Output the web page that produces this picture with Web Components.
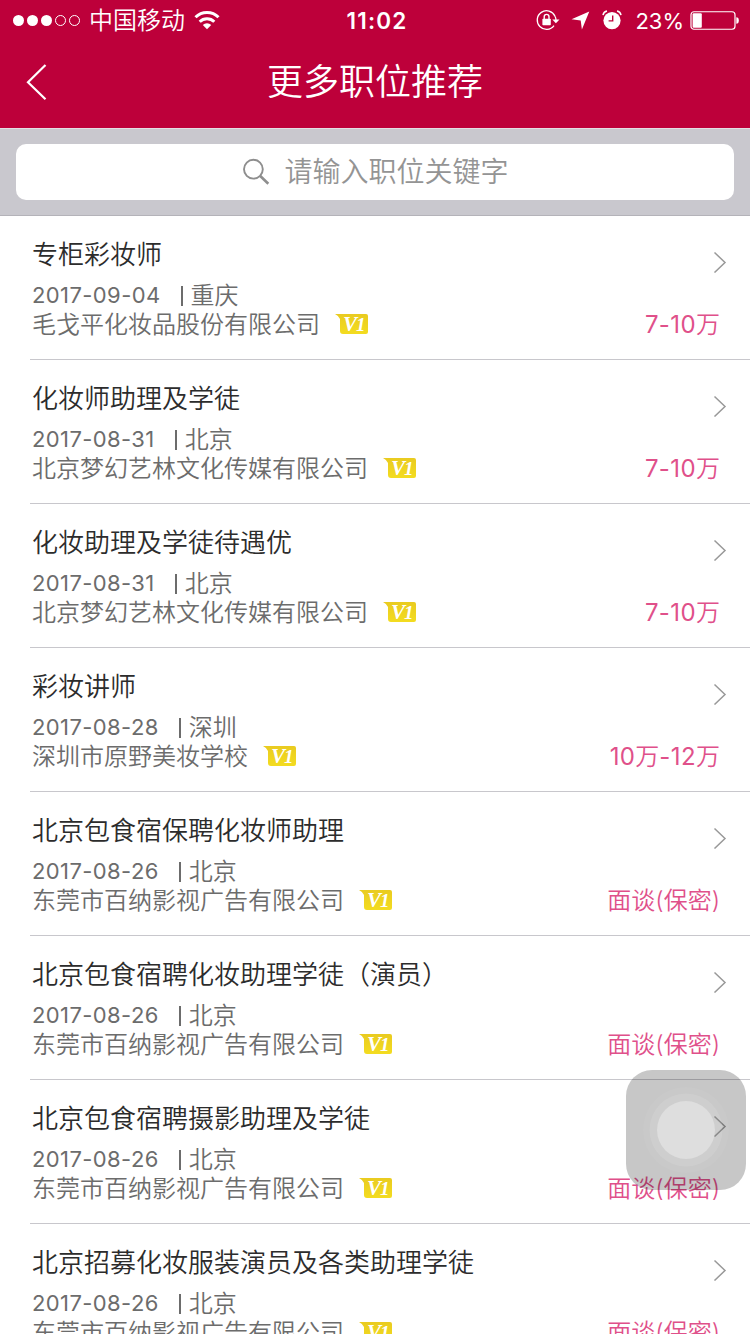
<!DOCTYPE html>
<html lang="zh-CN">
<head>
<meta charset="UTF-8">
<title>更多职位推荐</title>
<style>
    html, body {
        margin: 0;
        height: 1334px;
        overflow: hidden;
    }

    body {
        background: #fff;
        font-family: Inter, "Noto Sans CJK SC", sans-serif;
        font-weight: 350;
    }
</style>
</head>
<body>
<job-app></job-app>

<script>
    class StatusBar extends HTMLElement {
        constructor() {
            super();
            this.attachShadow({ mode: 'open' });
        }

        connectedCallback() {
            this.shadowRoot.innerHTML = `
                <style>
                    :host {
                        display: grid;
                        grid-template-columns: 1fr auto 1fr;
                        align-items: center;
                        height: 40px;
                        padding: 0 11px 0 13px;
                        color: #fff;
                        font-size: 24px;
                        line-height: 40px;
                    }

                    .left, .right {
                        display: flex;
                        align-items: center;
                    }

                    .right {
                        justify-content: flex-end;
                    }

                    .carrier {
                        margin: 0 9px 0 8px;
                        padding-top: 2px;
                        line-height: 38px;
                    }

                    .time {
                        padding: 2px 0 0 2px;
                        font-size: 22.5px;
                        font-weight: 600;
                        letter-spacing: 1.2px;
                        line-height: 38px;
                    }

                    .percent {
                        font-size: 22px;
                        font-weight: 400;
                        margin: 0 6px 0 13px;
                        padding-top: 2px;
                        line-height: 38px;
                    }

                    svg {
                        display: block;
                        flex: none;
                    }
                </style>
                <div class="left">
                    <svg width="68" height="12" viewBox="0 0 68 12" fill="#fff">
                        <circle cx="5.5" cy="6.5" r="5.5"/>
                        <circle cx="19.5" cy="6.5" r="5.5"/>
                        <circle cx="33.5" cy="6.5" r="5.5"/>
                        <g fill="none" stroke="#fff">
                            <circle cx="47.5" cy="6.5" r="5"/>
                            <circle cx="61.5" cy="6.5" r="5"/>
                        </g>
                    </svg>
                    <span class="carrier">中国移动</span>
                    <svg width="26" height="20" viewBox="0 0 26 20">
                        <g fill="none" stroke="#fff" stroke-width="3">
                            <path d="M1.5 7.3a16 16 0 0 1 23 0"/>
                            <path d="M5.7 11.7a10.4 10.4 0 0 1 14.6 0"/>
                        </g>
                        <path d="M8.8 15a6 6 0 0 1 8.4 0L13 19.2z" fill="#fff"/>
                    </svg>
                </div>
                <span class="time">11:02</span>
                <div class="right">
                    <svg width="24" height="22" viewBox="0 0 24 22">
                        <path d="M19 7.2A9.3 9.3 0 1 0 18 16.6M19 7.2q1 1.8 1 4" fill="none" stroke="#fff" stroke-width="1.3"/>
                        <path d="M16.3 10.4h7.2l-3.6 3.8z" fill="#fff"/>
                        <rect x="6.4" y="9.7" width="8.4" height="6.6" rx=".8" fill="#fff"/>
                        <path d="M8.2 10.5V7.8a2.4 2.4 0 0 1 4.8 0v2.7" fill="none" stroke="#fff" stroke-width="1.4"/>
                    </svg>
                    <svg width="19" height="19" viewBox="0 0 19 19" style="margin-left: 11px">
                        <path d="M18.3.5 10.9 18.5 9.7 9.6.5 8.3z" fill="#fff"/>
                    </svg>
                    <svg width="20" height="20" viewBox="0 0 20 20" style="margin-left: 12px">
                        <circle cx="10" cy="10.6" r="8.6" fill="#fff"/>
                        <path d="M10.7 5.5v5.4H6.6" fill="none" stroke="#bd003a" stroke-width="1.4"/>
                        <path d="M1 5.2A5 5 0 0 1 5 1.1M19 5.2a5 5 0 0 0-4-4.1" fill="none" stroke="#fff" stroke-width="1.5"/>
                    </svg>
                    <span class="percent">23%</span>
                    <svg width="49" height="20" viewBox="0 0 49 20">
                        <rect x="1" y="1.75" width="44" height="17.5" rx="3" fill="none" stroke="#fff" stroke-width="1.2"/>
                        <rect x="2.6" y="3.2" width="9.2" height="14.6" rx="1" fill="#fff"/>
                        <path d="M46.3 7.2q2.5 0 2.5 3.3t-2.5 3.3z" fill="#fff"/>
                    </svg>
                </div>
            `;
        }
    }

    class NavBar extends HTMLElement {
        constructor() {
            super();
            this.attachShadow({ mode: 'open' });
        }

        connectedCallback() {
            this.shadowRoot.innerHTML = `
                <style>
                    :host {
                        display: grid;
                        grid-template-columns: 100px 1fr 100px;
                        align-items: center;
                        height: 88px;
                        color: #fff;
                    }

                    svg {
                        display: block;
                        margin: 0 0 4px 26px;
                    }

                    h1 {
                        margin: 0;
                        padding-bottom: 4px;
                        text-align: center;
                        font-size: 36px;
                        font-weight: inherit;
                        line-height: 50px;
                    }
                </style>
                <svg width="22" height="36" viewBox="0 0 22 36">
                    <path d="M19.5 1 2 18.2l17.5 17" fill="none" stroke="#fff" stroke-width="2.2"/>
                </svg>
                <h1><slot></slot></h1>
            `;
        }
    }

    class SearchBar extends HTMLElement {
        constructor() {
            super();
            this.attachShadow({ mode: 'open' });
        }

        connectedCallback() {
            this.shadowRoot.innerHTML = `
                <style>
                    :host {
                        display: block;
                        box-sizing: border-box;
                        height: 88px;
                        padding: 15px 16px;
                        background: #c9c8ce;
                        border-top: 1px solid #e4dfe4;
                        border-bottom: 1px solid #b4b3b9;
                    }

                    .field {
                        display: flex;
                        align-items: center;
                        justify-content: center;
                        gap: 14px;
                        height: 56px;
                        padding-left: 1px;
                        border-radius: 10px;
                        background: #fff;
                        color: #949494;
                        font-size: 28px;
                        line-height: 40px;
                    }
                </style>
                <div class="field">
                    <svg width="28" height="28" viewBox="0 0 28 28" fill="none" stroke="#8e8e8e">
                        <circle cx="11.4" cy="11.2" r="9.4" stroke-width="1.9"/>
                        <path d="m18 17.8 8.3 8" stroke-width="2.6"/>
                    </svg>
                    <span><slot></slot></span>
                </div>
            `;
        }
    }

    class VipBadge extends HTMLElement {
        constructor() {
            super();
            this.attachShadow({ mode: 'open' });
        }

        connectedCallback() {
            this.shadowRoot.innerHTML = `
                <style>
                    :host {
                        display: flex;
                        align-items: baseline;
                        box-sizing: border-box;
                        width: 33px;
                        height: 20px;
                        padding-left: 8px;
                        background: linear-gradient(#e9cb20, #f3dc20);
                        clip-path: path("M0 0H31Q33 0 33 2V18Q33 20 31 20H8Q5 20 5 17V5Q4 2 0 0Z");
                        color: #fff;
                        font: italic bold 21px/21px "Liberation Serif", serif;
                    }

                    small {
                        margin-left: -1px;
                        font-size: 19px;
                    }
                </style>
                <span>V</span><small>1</small>
            `;
        }
    }

    class JobItem extends HTMLElement {
        constructor() {
            super();
            this.attachShadow({ mode: 'open' });
        }

        connectedCallback() {
            const get = name => this.getAttribute(name);
            // numbers are set a little wider than the Chinese text
            const salary = get('salary').replace(/[\d-]+/g, '<span class="num">$&</span>');
            this.shadowRoot.innerHTML = `
                <style>
                    :host {
                        display: flex;
                        justify-content: space-between;
                        box-sizing: border-box;
                        height: 144px;
                        margin-left: 30px;
                        padding: 21px 30px 0 2px;
                        border-bottom: 1px solid #c8c7cc;
                        color: #6c6c6c;
                        font-size: 24px;
                        line-height: 29px;
                        white-space: nowrap;
                    }

                    h2 {
                        margin: 0 0 8px;
                        color: #2c2c2c;
                        font-size: 26px;
                        font-weight: inherit;
                        line-height: 36px;
                    }

                    .meta, .company {
                        display: flex;
                        align-items: center;
                        height: 29px;
                    }

                    .date {
                        font-size: 22px;
                        font-weight: 400;
                        letter-spacing: 0.4px;
                    }

                    .bar {
                        width: 2px;
                        height: 20px;
                        margin: 0 8px 0 20px;
                        background: #6c6c6c;
                    }

                    vip-badge {
                        margin: 0 0 1px 15px;
                    }

                    .side {
                        display: flex;
                        flex-direction: column;
                        align-items: flex-end;
                        color: #e0508a;
                    }

                    .side svg {
                        margin: 14px -7px 37px 0;
                    }

                    .num {
                        font-weight: 400;
                        letter-spacing: 0.4px;
                    }
                </style>
                <div>
                    <h2><slot></slot></h2>
                    <div class="meta">
                        <span class="date">${get('date')}</span>
                        <span class="bar"></span>
                        <span>${get('city')}</span>
                    </div>
                    <div class="company">
                        <span>${get('company')}</span>
                        <vip-badge></vip-badge>
                    </div>
                </div>
                <div class="side">
                    <svg width="14" height="22" viewBox="0 0 14 22">
                        <path d="M1.5 1.5 12 11.5 1.5 21.5" fill="none" stroke="#999" stroke-width="1.5"/>
                    </svg>
                    <span>${salary}</span>
                </div>
            `;
        }
    }

    // Floating touch button, lies over the list
    class AssistiveTouch extends HTMLElement {
        constructor() {
            super();
            this.attachShadow({ mode: 'open' });
        }

        connectedCallback() {
            this.shadowRoot.innerHTML = `
                <style>
                    :host {
                        position: absolute;
                        left: 626px;
                        top: 1070px;
                        width: 120px;
                        height: 120px;
                        border-radius: 26px;
                        background: rgba(0, 0, 0, 0.22);
                    }

                    svg {
                        display: block;
                    }
                </style>
                <svg width="120" height="120" viewBox="0 0 120 120" fill="#fff">
                    <circle cx="60" cy="60" r="43" fill-opacity=".04"/>
                    <circle cx="60" cy="60" r="36.5" fill-opacity=".1"/>
                    <circle cx="60" cy="60" r="29" fill-opacity=".32"/>
                </svg>
            `;
        }
    }

    class JobApp extends HTMLElement {
        constructor() {
            super();
            this.attachShadow({ mode: 'open' });
            this.jobs = [
                ['专柜彩妆师', '2017-09-04', '重庆', '毛戈平化妆品股份有限公司', '7-10万'],
                ['化妆师助理及学徒', '2017-08-31', '北京', '北京梦幻艺林文化传媒有限公司', '7-10万'],
                ['化妆助理及学徒待遇优', '2017-08-31', '北京', '北京梦幻艺林文化传媒有限公司', '7-10万'],
                ['彩妆讲师', '2017-08-28', '深圳', '深圳市原野美妆学校', '10万-12万'],
                ['北京包食宿保聘化妆师助理', '2017-08-26', '北京', '东莞市百纳影视广告有限公司', '面谈(保密)'],
                ['北京包食宿聘化妆助理学徒（演员）', '2017-08-26', '北京', '东莞市百纳影视广告有限公司', '面谈(保密)'],
                ['北京包食宿聘摄影助理及学徒', '2017-08-26', '北京', '东莞市百纳影视广告有限公司', '面谈(保密)'],
                ['北京招募化妆服装演员及各类助理学徒', '2017-08-26', '北京', '东莞市百纳影视广告有限公司', '面谈(保密)']
            ];
        }

        connectedCallback() {
            this.shadowRoot.innerHTML = `
                <style>
                    :host {
                        display: block;
                        position: relative;
                        width: 750px;
                        height: 1334px;
                        overflow: hidden;
                    }

                    header {
                        background: #bd003a;
                    }
                </style>
                <header>
                    <status-bar></status-bar>
                    <nav-bar>更多职位推荐</nav-bar>
                </header>
                <search-bar>请输入职位关键字</search-bar>
                <main>
                    ${this.jobs.map(([title, date, city, company, salary]) => `
                        <job-item date="${date}" city="${city}" company="${company}" salary="${salary}">${title}</job-item>
                    `).join('')}
                </main>
                <assistive-touch></assistive-touch>
            `;
        }
    }

    customElements.define('status-bar', StatusBar);
    customElements.define('nav-bar', NavBar);
    customElements.define('search-bar', SearchBar);
    customElements.define('vip-badge', VipBadge);
    customElements.define('job-item', JobItem);
    customElements.define('assistive-touch', AssistiveTouch);
    customElements.define('job-app', JobApp);
</script>
</body>
</html>
